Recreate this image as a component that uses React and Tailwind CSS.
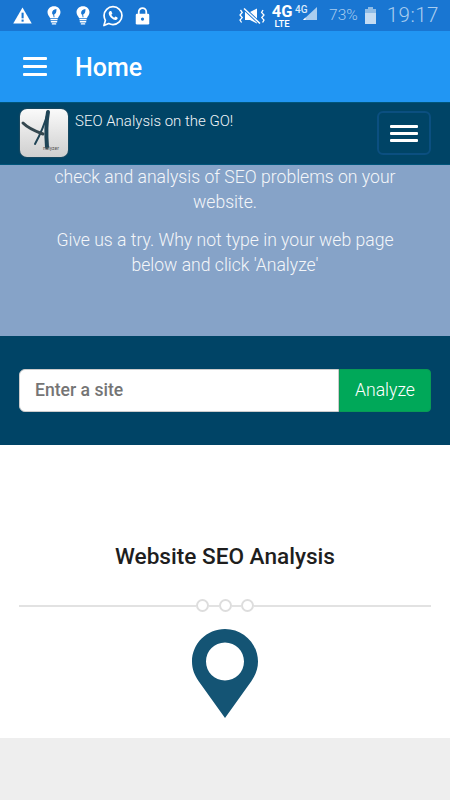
import React from 'react';

// Status bar icons, drawn to match the phone's own glyphs
function WarningIcon() {
  return (
    <svg width="19" height="17" viewBox="0 0 20 18">
      <path d="M10 0.5 L19.8 17.5 L0.2 17.5 Z" fill="#fff" />
      <rect x="9" y="6" width="2.2" height="6" fill="#1976d2" />
      <rect x="9" y="13.3" width="2.2" height="2.2" fill="#1976d2" />
    </svg>
  );
}

function BulbIcon() {
  return (
    <svg width="14" height="21" viewBox="0 0 16 22">
      <path d="M8 0.5 C3.6 0.5 0.6 3.6 0.6 7.4 C0.6 10.4 2.6 11.8 3.6 14 L12.4 14 C13.4 11.8 15.4 10.4 15.4 7.4 C15.4 3.6 12.4 0.5 8 0.5 Z" fill="#fff" />
      <path d="M10.8 3.6 C7.6 4 5.8 5.6 5.8 8 C5.8 9 6.4 9.6 7 9.8 L7.6 13 L8.6 13 L8.2 9.8 C10 9.4 11 7 10.8 3.6 Z" fill="#1976d2" />
      <rect x="3.8" y="15" width="8.4" height="1.5" rx="0.7" fill="#fff" />
      <rect x="4.2" y="17.4" width="7.6" height="1.5" rx="0.7" fill="#fff" />
      <rect x="5.4" y="19.8" width="5.2" height="1.5" rx="0.7" fill="#fff" />
    </svg>
  );
}

function WhatsappIcon() {
  return (
    <svg width="20" height="22" viewBox="0 0 21 22">
      <path d="M1 21 L2.5 15.6 C1.6 14.1 1.1 12.4 1.1 10.6 C1.1 5.4 5.3 1.2 10.5 1.2 C15.7 1.2 19.9 5.4 19.9 10.6 C19.9 15.8 15.7 20 10.5 20 C8.9 20 7.4 19.6 6 18.9 Z" fill="none" stroke="#fff" strokeWidth="1.8" strokeLinejoin="round" />
      <path d="M7.6 5.8 C7 5.9 6 6.8 6 8.2 C6 10 7.4 12 8.8 13.2 C10.4 14.6 12.2 15.4 13.4 15.2 C14.6 15 15.4 14 15.4 13 C15.4 12.6 13.4 11.6 13 11.6 C12.6 11.6 12.2 12.8 11.8 12.8 C11 12.8 8.8 10.6 8.8 9.8 C8.8 9.4 9.8 9 9.8 8.6 C9.8 8.2 8.8 5.8 8.4 5.8 Z" fill="#fff" />
    </svg>
  );
}

function LockIcon() {
  return (
    <svg width="15" height="18" viewBox="0 0 16 19">
      <path d="M4 8 L4 5 C4 2.8 5.8 1.2 8 1.2 C10.2 1.2 12 2.8 12 5 L12 8" fill="none" stroke="#fff" strokeWidth="1.9" />
      <rect x="0.8" y="7" width="14.4" height="11.6" rx="1.4" fill="#fff" />
      <circle cx="8" cy="12.8" r="1.7" fill="#1976d2" />
    </svg>
  );
}

function MuteIcon() {
  return (
    <svg width="27" height="16" viewBox="0 0 27 16">
      <path d="M6 4 L11 4 L18 0.5 L18 15.5 L11 12 L6 12 Z" fill="#fff" />
      <path d="M5 0.5 L21 15.5" stroke="#1976d2" strokeWidth="3.2" />
      <path d="M5 0.5 L21 15.5" stroke="#fff" strokeWidth="1.5" />
      <path d="M1.5 2 L3.2 4.4 L1 7 L3.2 9.6 L1 12 L2.6 14.5" fill="none" stroke="#fff" strokeWidth="1.3" />
      <path d="M24 2 L22.6 4.4 L25 7 L22.8 9.6 L25 12 L23.6 14.5" fill="none" stroke="#fff" strokeWidth="1.3" />
    </svg>
  );
}

function StatusBar() {
  return (
    <div className="h-[31px] bg-[#1976d2] flex items-center justify-between pl-[13px] pr-[11px] shrink-0">
      <div className="flex items-center">
        <WarningIcon />
        <div className="flex items-center gap-[15px] ml-[15px]">
          <BulbIcon />
          <BulbIcon />
        </div>
        <div className="ml-[13px] flex"><WhatsappIcon /></div>
        <div className="ml-[12px] flex"><LockIcon /></div>
      </div>
      <div className="flex items-center">
        <MuteIcon />
        <div className="flex flex-col items-center w-[20px] ml-[6px] text-white font-bold">
          <span className="text-[16.5px] leading-[15px]">4G</span>
          <span className="text-[9.5px] leading-[9px] font-medium">LTE</span>
        </div>
        <div className="relative w-[22px] h-[16px] ml-[3px] mb-[3px]">
          <span className="absolute left-0 -top-[1px] text-[#dcebfa] font-medium text-[10px] leading-[10px]">4G</span>
          <svg className="absolute left-0 top-0" width="22" height="16" viewBox="0 0 22 16">
            <path d="M22 1 L22 14 L8 14 Z" fill="#a9cdef" />
            <path d="M10.5 11.5 L10.5 14 L8 14 Z" fill="#fff" />
          </svg>
        </div>
        <span className="ml-[12px] text-[15.5px] text-[#a9cdef] font-light">73%</span>
        <div className="relative ml-[7px] w-[11px] h-[15px] bg-[#c4dcf3] mt-[1px]">
          <div className="h-[4px] bg-[#8fbce6]" />
          <div className="absolute -top-[2px] left-[3px] w-[5px] h-[2px] bg-[#8fbce6]" />
        </div>
        <span className="ml-[11px] text-[20.5px] leading-none text-[#a9cdef] font-light tracking-[0.5px]">19:17</span>
      </div>
    </div>
  );
}

function AppBar() {
  return (
    <div className="h-[71px] bg-[#2196f3] flex items-center pl-[23px] shrink-0">
      <div className="w-[24px] flex flex-col gap-[5px]">
        <div className="h-[3px] bg-white rounded-[1px]" />
        <div className="h-[3px] bg-white rounded-[1px]" />
        <div className="h-[3px] bg-white rounded-[1px]" />
      </div>
      <h1 className="ml-[28px] mt-[2px] text-[25px] font-medium text-white">Home</h1>
    </div>
  );
}

// Blurry app logo: a dark brush stroke "A" on a light tile
function Logo() {
  return (
    <div className="relative w-[48px] h-[48px] rounded-[7px] bg-gradient-to-b from-[#fafafa] to-[#cfcfcf] shadow-[0_0_2px_#555] shrink-0">
      <svg className="blur-[0.5px]" width="48" height="48" viewBox="0 0 48 48">
        <path d="M28 3 C25 14 20 26 15 35" fill="none" stroke="#1f4456" strokeWidth="2" strokeLinecap="round" />
        <path d="M28 3 C26 14 26 26 27 38" fill="none" stroke="#1f4456" strokeWidth="4" strokeLinecap="round" />
        <path d="M3 14 C9 20 15 22 23 25" fill="none" stroke="#34474f" strokeWidth="3" strokeLinecap="round" />
      </svg>
      <span className="absolute left-[23px] top-[36px] text-[5px] leading-[6px] text-[#555555]">nalyzer</span>
    </div>
  );
}

function NavBar() {
  return (
    <div className="h-[63px] bg-[#004466] border-t border-b border-[#00557a] flex items-start pl-[20px] pr-[19px] pt-[6px] shrink-0">
      <Logo />
      <span className="ml-[7px] text-[15px] leading-[24px] font-light text-[#f1f5f8]">SEO Analysis on the GO!</span>
      <button className="ml-auto mt-[2px] w-[54px] h-[44px] border-2 border-[#0b4f80] rounded-[6px] flex flex-col items-center justify-center gap-[4px]">
        <div className="w-[28px] h-[3px] bg-white rounded-[1px]" />
        <div className="w-[28px] h-[3px] bg-white rounded-[1px]" />
        <div className="w-[28px] h-[3px] bg-white rounded-[1px]" />
      </button>
    </div>
  );
}

function Hero() {
  return (
    <div className="h-[171px] bg-[#86a3c8] flex flex-col justify-end items-center overflow-hidden pb-[58px] px-[40px] text-center text-[17.6px] leading-[25px] font-light text-[#f4f6f9] shrink-0">
      <p className="whitespace-nowrap">check and analysis of SEO problems on your</p>
      <p>website.</p>
      <p className="mt-[13px] whitespace-nowrap">Give us a try. Why not type in your web page</p>
      <p className="whitespace-nowrap">below and click 'Analyze'</p>
    </div>
  );
}

function SearchBar() {
  return (
    <div className="h-[109px] bg-[#004466] flex items-center px-[19px] shrink-0">
      <div className="flex w-full h-[43px]">
        <div className="flex-1 bg-white rounded-l-[6px] border border-[#cccccc] flex items-center pl-[15px]">
          <span className="text-[17.6px] font-medium text-[#757575]">Enter a site</span>
        </div>
        <button className="w-[92px] bg-[#00a859] border border-[#0a9a55] rounded-r-[4px] text-[17.6px] font-light text-white">
          Analyze
        </button>
      </div>
    </div>
  );
}

function Divider() {
  return (
    <div className="flex items-center px-[19px] mt-[27px]">
      <div className="flex-1 h-[2px] bg-[#e2e2e2]" />
      <div className="w-[13px] h-[13px] rounded-full border-2 border-[#dddddd]" />
      <div className="w-[9.5px] h-[2px] bg-[#e2e2e2]" />
      <div className="w-[13px] h-[13px] rounded-full border-2 border-[#dddddd]" />
      <div className="w-[9.5px] h-[2px] bg-[#e2e2e2]" />
      <div className="w-[13px] h-[13px] rounded-full border-2 border-[#dddddd]" />
      <div className="flex-1 h-[2px] bg-[#e2e2e2]" />
    </div>
  );
}

function Pin() {
  return (
    <svg className="mx-auto mt-[17px]" width="66" height="90" viewBox="0 0 66 90">
      <path
        fillRule="evenodd"
        d="M33 0 C51.2 0 66 14.6 66 32.6 C66 40 63.4 46.5 59.5 52 L33 89 L6.5 52 C2.6 46.5 0 40 0 32.6 C0 14.6 14.8 0 33 0 Z M33 13.5 C22.5 13.5 14 22 14 32.5 C14 43 22.5 51.5 33 51.5 C43.5 51.5 52 43 52 32.5 C52 22 43.5 13.5 33 13.5 Z"
        fill="#145474"
      />
    </svg>
  );
}

export default function App() {
  return (
    <div className="w-[450px] h-[800px] overflow-hidden flex flex-col bg-[#eeeeee] font-['Roboto',sans-serif]">
      <StatusBar />
      <AppBar />
      <NavBar />
      <Hero />
      <SearchBar />
      <div className="h-[293px] bg-white pt-[97px] shrink-0">
        <h2 className="text-center text-[22.6px] leading-[30px] font-medium text-[#1e1e1e]">Website SEO Analysis</h2>
        <Divider />
        <Pin />
      </div>
    </div>
  );
}
